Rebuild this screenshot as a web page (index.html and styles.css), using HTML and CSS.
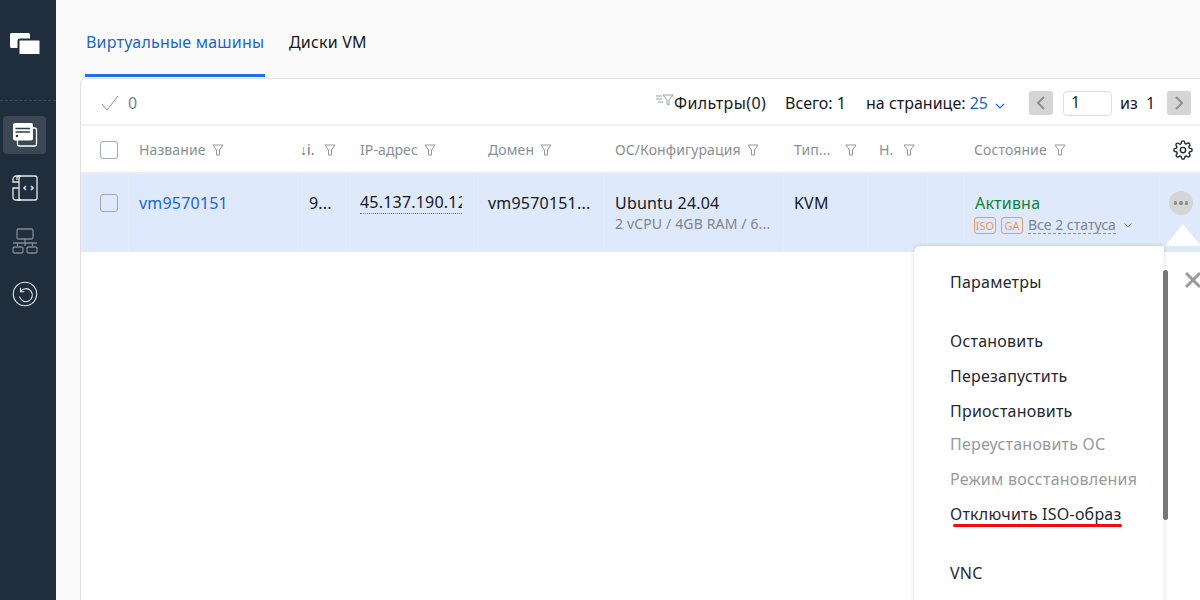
FILE: index.html
```html
<!DOCTYPE html>
<html lang="ru">
<head>
<meta charset="utf-8">
<title>Виртуальные машины</title>
<link rel="stylesheet" href="styles.css">
</head>
<body>
<div class="app">
  <aside class="sidebar">
    <div class="logo-wrap">
      <svg width="32" height="24" viewBox="0 0 32 24"><rect x="1" y="1" width="20" height="15" rx="1.5" fill="#fff"/><rect x="9.5" y="7.5" width="22" height="15.5" rx="1.5" fill="#fff" stroke="#1f2d3c" stroke-width="2"/></svg>
    </div>
    <nav class="nav">
      <div class="nav-item active">
        <svg width="26" height="26" viewBox="0 0 26 26" fill="none" stroke="#fff" stroke-width="1.3"><rect x="5.5" y="6" width="19" height="18" rx="2"/><rect x="1" y="1" width="20" height="17.500" rx="2" fill="#fff" stroke="none"/><path d="M3.500 6.500H18M3.500 10H18" stroke="#2f3d4c"/><circle cx="5" cy="14" r="1.200" fill="#2f3d4c" stroke="none"/></svg>
      </div>
      <div class="nav-item">
        <svg width="26" height="26" viewBox="0 0 26 26" fill="none" stroke="#e6e9ec" stroke-width="1.300"><path d="M5 5V2.500C5 1.500 6 1 7 1H23a2 2 0 0 1 2 2V23a2 2 0 0 1-2 2H5"/><path d="M9 1c-2 0-2 2-2 3v3H1V4c0-2 2-3 3-3h5M1 13h6v10c0 1 1 2 2 2H4c-2 0-3-1-3-3zM7 7v6"/><path d="M14 11l-2 2 2 2M19 11l2 2-2 2" stroke-width="1.500"/></svg>
      </div>
      <div class="nav-item">
        <svg width="26" height="26" viewBox="0 0 26 26" fill="none" stroke="#7f8994" stroke-width="1.300"><rect x="5" y="1" width="16" height="10" rx="1.500"/><path d="M13 11v7M1 15h24M5.500 15v3M20.500 15v3"/><rect x="1" y="19" width="10" height="6" rx="1.500"/><rect x="15" y="19" width="10" height="6" rx="1.500"/></svg>
      </div>
      <div class="nav-item">
        <svg width="26" height="26" viewBox="0 0 26 26" fill="none" stroke="#e6e9ec" stroke-width="1.100"><circle cx="13" cy="13" r="11.700"/><path d="M8.500 10.500a6.500 6.500 0 1 1-1 5M8.500 6.800v3.900h3.900"/></svg>
      </div>
    </nav>
  </aside>

  <main class="main">
    <div class="tabs">
      <a class="tab tab-active">Виртуальные машины</a>
      <a class="tab">Диски VM</a>
    </div>

    <section class="card">
      <div class="toolbar">
        <div class="selected">
          <svg width="18" height="16" viewBox="0 0 18 16" fill="none" stroke="#8a8f96" stroke-width="1"><path d="M1 9l5 6L17 1"/></svg>
          <span>0</span>
        </div>
        <div class="filters">
          <svg width="18" height="12" viewBox="0 0 18 12" fill="none" stroke="#9a9ea3" stroke-width="1"><path d="M0 2h6M0 5h6M2 8h5M7 1h10l-4 5v5l-2-1V6z"/></svg>
          <span>Фильтры(0)</span>
        </div>
        <div class="total">Всего: 1</div>
        <div class="per-page">на странице: <span class="link">25</span>
          <svg class="per-chev" width="10" height="6" viewBox="0 0 10 6" fill="none" stroke="#1a66d6" stroke-width="1.200"><path d="M1 1l4 4 4-4"/></svg>
        </div>
        <div class="pager">
          <button class="page-btn"><svg width="10" height="14" viewBox="0 0 10 14" fill="none" stroke="#8d8d8d" stroke-width="2"><path d="M8 1L2 7l6 6"/></svg></button>
          <div class="page-input">1</div>
          <span class="of">из&nbsp; 1</span>
          <button class="page-btn"><svg width="10" height="14" viewBox="0 0 10 14" fill="none" stroke="#8d8d8d" stroke-width="2"><path d="M2 1l6 6-6 6"/></svg></button>
        </div>
      </div>

      <div class="grid head">
        <div class="cell c-check"><span class="checkbox"></span></div>
        <div class="cell"><span>Название</span><svg class="funnel" viewBox="0 0 12 12"><path d="M1 1h10L7.500 6v5h-3V6z"/></svg></div>
        <div class="cell cell-id"><span><b class="sort">↓</b>i.</span><svg class="funnel" viewBox="0 0 12 12"><path d="M1 1h10L7.500 6v5h-3V6z"/></svg></div>
        <div class="cell"><span>IP-адрес</span><svg class="funnel" viewBox="0 0 12 12"><path d="M1 1h10L7.500 6v5h-3V6z"/></svg></div>
        <div class="cell"><span>Домен</span><svg class="funnel" viewBox="0 0 12 12"><path d="M1 1h10L7.500 6v5h-3V6z"/></svg></div>
        <div class="cell"><span>ОС/Конфигурация</span><svg class="funnel" viewBox="0 0 12 12"><path d="M1 1h10L7.500 6v5h-3V6z"/></svg></div>
        <div class="cell"><span>Тип...</span><svg class="funnel funnel-far" viewBox="0 0 12 12"><path d="M1 1h10L7.500 6v5h-3V6z"/></svg></div>
        <div class="cell cell-n"><span>Н.</span><svg class="funnel" viewBox="0 0 12 12"><path d="M1 1h10L7.500 6v5h-3V6z"/></svg></div>
        <div class="cell"></div>
        <div class="cell cell-state"><span>Состояние</span><svg class="funnel" viewBox="0 0 12 12"><path d="M1 1h10L7.500 6v5h-3V6z"/></svg></div>
        <div class="cell c-gear">
          <svg width="20" height="20" viewBox="0 0 24 24" fill="none" stroke="#1f2933" stroke-width="1.700" stroke-linejoin="round"><circle cx="12" cy="12" r="3.200"/><path d="M19.400 15a1.650 1.650 0 0 0 .33 1.820l.06.06a2 2 0 1 1-2.830 2.830l-.06-.06a1.650 1.650 0 0 0-2.800 1.170V21a2 2 0 0 1-4 0v-.09a1.650 1.650 0 0 0-2.800-1.170l-.06.06a2 2 0 1 1-2.830-2.830l.06-.06A1.650 1.650 0 0 0 3.090 14H3a2 2 0 0 1 0-4h.09a1.650 1.650 0 0 0 1.170-2.800l-.06-.06a2 2 0 1 1 2.830-2.830l.06.06A1.650 1.650 0 0 0 10 3.090V3a2 2 0 0 1 4 0v.09a1.650 1.650 0 0 0 2.800 1.170l.06-.06a2 2 0 1 1 2.830 2.830l-.06.06A1.650 1.650 0 0 0 20.910 10H21a2 2 0 0 1 0 4h-.09a1.650 1.650 0 0 0-1.510 1z"/></svg>
        </div>
      </div>

      <div class="grid row">
        <div class="td c-check"><span class="checkbox"></span></div>
        <div class="td"><a class="link">vm9570151</a></div>
        <div class="td td-id">9...</div>
        <div class="td"><span class="ip">45.137.190.12</span></div>
        <div class="td"><span class="ellip">vm9570151...</span></div>
        <div class="td td-os"><div>Ubuntu 24.04</div><div class="sub">2 vCPU / 4GB RAM / 6...</div></div>
        <div class="td">KVM</div>
        <div class="td"></div>
        <div class="td"></div>
        <div class="td td-state">
          <div class="active-state">Активна</div>
          <div class="statuses">
            <span class="tag">ISO</span><span class="tag">GA</span>
            <span class="all">Все 2 статуса</span>
            <svg width="8" height="5" viewBox="0 0 8 5" fill="none" stroke="#8d939b" stroke-width="1"><path d="M.5.500L4 4 7.500.500"/></svg>
          </div>
        </div>
        <div class="td td-act"><span class="dots"><i></i><i></i><i></i></span></div>
      </div>
    </section>

    <div class="menu">
      <span class="menu-arrow"></span>
      <span class="scrollbar"></span>
      <div class="menu-group">
        <div class="menu-item">Параметры</div>
      </div>
      <div class="menu-group">
        <div class="menu-item">Остановить</div>
        <div class="menu-item">Перезапустить</div>
        <div class="menu-item">Приостановить</div>
        <div class="menu-item off off-first">Переустановить ОС</div>
        <div class="menu-item off">Режим восстановления</div>
        <div class="menu-item"><span class="marked">Отключить ISO-образ</span></div>
      </div>
      <div class="menu-group">
        <div class="menu-item">VNC</div>
      </div>
    </div>
    <svg class="close" width="16" height="18" viewBox="0 0 16 18" fill="none" stroke="#9a9a9a" stroke-width="3"><path d="M1 2l14 14M15 2L1 16"/></svg>
  </main>
</div>
</body>
</html>
```

FILE: styles.css
```css
* { box-sizing: border-box; }
html, body { margin: 0; height: 600px; overflow: hidden; }
body { font-family: "Noto Sans", "Open Sans", sans-serif; font-size: 16px; color: #1f2933; background: #fafafa; }
.app { display: flex; height: 600px; width: 1200px; overflow: hidden; }

.sidebar { width: 56px; flex: none; background: #1f2d3c; }
.logo-wrap { height: 101px; border-bottom: 1px dashed #3c4957; padding: 32px 0 0 9px; }
.nav { display: flex; flex-direction: column; padding: 15px 0 0 3px; gap: 15px; }
.nav-item { width: 43px; height: 38px; border-radius: 4px; display: flex; align-items: center; justify-content: center; }
.active { background: #3b4755; }

.main { position: relative; flex: 1; min-width: 0; padding: 0 0 0 24px; }
.tabs { display: flex; gap: 24px; height: 78px; padding-left: 5px; }
.tab { font-size: 16px; letter-spacing: .2px; line-height: 22px; padding-top: 31px; height: 77px; color: #16191d; }
.tab-active { color: #1a66d6; border-bottom: 3px solid #1a73e0; width: 180px; padding-left: 1px; }

.card { width: 1150px; height: 560px; background: #fff; border: 1px solid #dfdfdf; border-radius: 5px 0 0 0; }
.toolbar { height: 47px; display: flex; align-items: center; padding-top: 2px; border-bottom: 2px solid #f1f1f1; }
.selected { display: flex; align-items: center; gap: 9px; padding-left: 20px; width: 574px; color: #777f88; font-size: 16px; }
.filters { display: flex; align-items: center; width: 130px; color: #16191d; font-size: 16px; letter-spacing: .4px; white-space: nowrap; }
.filters svg { margin: -5px 0 0 1px; }
.total { width: 81px; font-size: 16px; white-space: nowrap; color: #16191d; }
.per-page { width: 163px; font-size: 16px; white-space: nowrap; color: #16191d; }
.per-chev { margin-left: 3px; }
.link { color: #1a66d6; }
.pager { display: flex; align-items: center; }
.page-btn { width: 24px; height: 24px; border: 0; padding: 0; background: #d5d5d5; border-radius: 3px; display: flex; align-items: center; justify-content: center; }
.page-input { width: 49px; height: 25px; margin: 1px 0 0 10px; padding-left: 7px; line-height: 21px; border: 1px solid #dfdfdf; border-radius: 4px; background: #fff; font-size: 16px; }
.of { width: 55px; padding-left: 8px; font-size: 16px; white-space: nowrap; color: #16191d; }

.grid { display: grid; grid-template-columns: 48px 170px 51px 128px 127px 179px 84px 60px 36px 196px 40px; }
.head { height: 48px; padding-top: 1px; border-bottom: 2px solid #ececec; }
.cell { display: flex; align-items: center; padding-left: 10px; font-size: 14px; color: #8a8f96; white-space: nowrap; letter-spacing: .1px; }
.c-check { padding-left: 19px; }
.cell-id { padding-left: 1px; color: #6a7079; }
.sort { font-weight: 400; }
.funnel { width: 12px; height: 12px; margin-left: 6px; fill: none; stroke: #93979c; stroke-width: 1; }
.funnel-far { margin-left: 15px; }
.cell-id .funnel { margin-left: 9px; }
.cell-n { padding-left: 11px; }
.cell-n .funnel { margin-left: 10px; }
.cell-state .funnel { margin-left: 7px; }
.c-gear { padding-left: 13px; }
.checkbox { display: block; width: 18px; height: 18px; border: 1px solid #a5a8ac; border-radius: 3px; }
.row { height: 78px; background: #dfe9fc; }
.td { padding: 18px 0 0 10px; font-size: 16px; letter-spacing: .2px; line-height: 22px; color: #16191d; white-space: nowrap; overflow: hidden; border-right: 1px solid #e5edfb; }
.td.c-check { padding-left: 19px; padding-top: 20px; }
.ip { display: block; width: 102px; overflow: hidden; border-bottom: 1px dotted #74797f; line-height: 21px; }
.sub { font-size: 14px; letter-spacing: .15px; line-height: 20px; color: #80858c; }
.td-state { padding-left: 11px; }
.active-state { color: #12813f; }
.statuses { display: flex; align-items: center; height: 24px; margin: -1px 0 0 -1px; font-size: 14px; letter-spacing: 0; color: #7f858c; }
.tag { display: block; width: 22px; height: 17px; margin-right: 5px; border: 1px solid #ec9a63; border-radius: 3px; color: #ec9a63; font-size: 11px; line-height: 15px; text-align: center; }
.all { margin-right: 8px; border-bottom: 1px dashed #8d939b; line-height: 16px; }
.td-act { padding: 17px 0 0 9px; border-right: 0; }
.dots { width: 24px; height: 24px; border-radius: 50%; background: #d5d5d5; display: flex; align-items: center; justify-content: center; gap: 2px; }
.dots i { width: 3.500px; height: 3.500px; border-radius: 50%; background: #8b8b8b; }

.menu { position: absolute; left: 858px; top: 246px; width: 250px; height: 400px; padding-top: 19px; background: #fff; border-radius: 6px 0 0 0; box-shadow: 0 0 4px rgba(0,0,0,.16); }
.menu-arrow { position: absolute; left: 251px; top: -22px; width: 0; height: 0; border: 18px solid transparent; border-top: 0; border-bottom: 22px solid #fff; }
.scrollbar { position: absolute; left: 249px; top: 24px; width: 5px; height: 250px; border-radius: 3px; background: #777; }
.menu-group { padding-bottom: 24px; }
.menu-item { height: 35px; line-height: 35px; padding-left: 36px; font-size: 16px; letter-spacing: .23px; color: #1f2933; white-space: nowrap; }
.off { color: #97999c; }
.off-first { margin-top: -2px; }
.marked { position: relative; display: inline-block; line-height: 20px; }
.marked::after { content: ""; position: absolute; left: 3px; right: 0; bottom: -3px; height: 3px; border-radius: 2px; background: #f20b0b; }
.close { position: absolute; left: 1129px; top: 271px; }
```
